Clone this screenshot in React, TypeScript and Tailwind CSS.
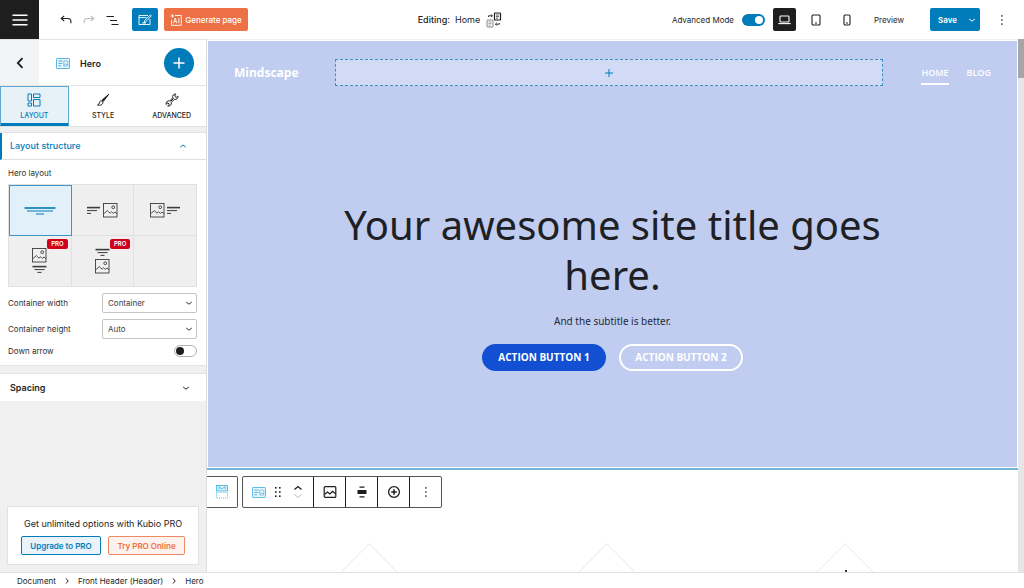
import type { ReactNode, SVGProps } from "react";

function Icon({ children, ...rest }: SVGProps<SVGSVGElement>) {
  return (
    <svg fill="none" stroke="currentColor" aria-hidden="true" {...rest}>
      {children}
    </svg>
  );
}

function HeroIcon() {
  return (
    <Icon viewBox="0 0 14 11" width="14" height="11" strokeWidth="0.8">
      <rect x="0.5" y="0.5" width="13" height="10" rx="0.6" fill="#e9f6fc" />
      <path d="M2.4 3h4M2.4 5.4h4M2.4 7.8h2.6" strokeWidth="0.9" />
      <path d="M7.8 8V3h4v5zM8 7.2l1.3-1.6 1 1 .6-.6.8 1" strokeWidth="0.6" />
    </Icon>
  );
}

function SectionIcon() {
  return (
    <Icon viewBox="0 0 12 14" width="12" height="14" strokeWidth="0.8">
      <rect x="0.5" y="0.5" width="11" height="5.4" fill="#dff1fa" />
      <path d="M2 2.2h2.5M2 4.2l2-1.4 2 1 2-1.4 2 1.8M8 2h2" strokeWidth="0.7" />
      <rect x="0.5" y="7.4" width="11" height="5.6" strokeDasharray="1 1" />
    </Icon>
  );
}

function Chevron({ dir = "down", className = "" }: { dir?: "up" | "down" | "right" | "left"; className?: string }) {
  const paths = {
    up: "M1.2 5.2 4 3l2.8 2.2",
    down: "M1.2 3 4 5.2 6.8 3",
    right: "M3 1.5 5.2 4 3 6.5",
    left: "M5.8 0.6 2.4 4l3.4 3.4",
  };
  return (
    <Icon viewBox="0 0 8 8" width="8" height="8" strokeWidth="1" className={className}>
      <path d={paths[dir]} />
    </Icon>
  );
}

function Dots() {
  return (
    <Icon viewBox="0 0 4 12" width="4" height="12" stroke="none" fill="currentColor">
      <rect x="1.2" y="1.2" width="1.4" height="1.4" />
      <rect x="1.2" y="5.3" width="1.4" height="1.4" />
      <rect x="1.2" y="9.4" width="1.4" height="1.4" />
    </Icon>
  );
}

function Picture({ x, y }: { x: number; y: number }) {
  return (
    <g transform={`translate(${x} ${y})`}>
      <rect x="0.5" y="0.5" width="13.5" height="13.5" strokeWidth="0.9" />
      <circle cx="10.2" cy="4.2" r="1.4" strokeWidth="0.9" />
      <path d="M1 10.5 4.3 7.6 7 10.2 8.6 8.8 10.3 10.4 12 9l2 1.8" strokeWidth="0.9" />
    </g>
  );
}

function HeaderBar() {
  return (
    <header className="flex h-[39px] shrink-0 items-center bg-white">
      <button aria-label="Menu" className="flex h-full w-[39px] items-center justify-center bg-[#1e1e1e] text-white">
        <Icon viewBox="0 0 16 12" width="16" height="12" strokeWidth="1.6">
          <path d="M0.5 1.2h15M0.5 6h15M0.5 10.8h15" />
        </Icon>
      </button>
      <div className="flex flex-1 items-center justify-between">
        <div className="flex items-center">
          <button aria-label="Undo" className="ml-[21px] text-[#1e1e1e]">
            <Icon viewBox="0 0 12 10" width="12" height="10" strokeWidth="1.1">
              <path d="M4.2 0.8 1.2 3.5l3 2.7M1.4 3.5h6.1c2.2 0 3.4 1.2 3.4 2.8v2" />
            </Icon>
          </button>
          <button aria-label="Redo" className="ml-[11px] text-[#bbbbbb]">
            <Icon viewBox="0 0 12 10" width="12" height="10" strokeWidth="1.1">
              <path d="M7.8 0.8l3 2.7-3 2.7M10.6 3.5H4.5C2.3 3.5 1.1 4.7 1.1 6.3v2" />
            </Icon>
          </button>
          <button aria-label="List view" className="ml-[11px] text-[#1e1e1e]">
            <Icon viewBox="0 0 14 10" width="14" height="10" strokeWidth="1.1">
              <path d="M0.5 1.5h7.5M4 5.5h7M5.5 9.5h7" />
            </Icon>
          </button>
          <button aria-label="Edit" className="ml-3 flex h-[23px] w-[26px] items-center justify-center rounded-xs bg-[#007cba] text-white">
            <Icon viewBox="0 0 14 12" width="14" height="12" strokeWidth="0.9">
              <path d="M10 1.5H1v9h11V5.2M1 3.6h7.4" />
              <path d="M6 8.7 6.8 6.4 12.4.8l1 1L7.9 7.7zM4 9h4" />
            </Icon>
          </button>
          <button className="ml-[6px] flex h-[23px] w-[84px] items-center justify-center gap-[3px] rounded-xs bg-[#ed7144] text-[8px] font-medium whitespace-nowrap text-white">
            <Icon viewBox="0 0 12 12" width="12" height="12" strokeWidth="0.9">
              <path d="M5 1.5h6.3v9.8H1.5V6" />
              <path d="M3.6 9.2 5.2 4l1.6 5.2M4.2 7.6h2M8.8 4v5.2" />
              <path d="M2.4 0v4M0.4 2h4" strokeWidth="0.8" />
            </Icon>
            Generate page
          </button>
        </div>
        <div className="flex items-center text-[9px]">
          <span className="font-medium">Editing:</span>
          <span className="ml-[5px]">Home</span>
          <button aria-label="Switch page" className="ml-[6px]">
            <Icon viewBox="0 0 16 16" width="16" height="16" strokeWidth="0.9">
              <rect x="8.5" y="1" width="6" height="7" rx="0.6" strokeWidth="1.2" />
              <path d="M10 3h3M10 4.6h3M10 6.2h2" strokeWidth="0.7" />
              <g stroke="#777777">
                <rect x="1" y="8" width="6" height="7" rx="0.6" />
                <path d="M2.5 10h3M2.5 11.6h3M2.5 13.2h2" strokeWidth="0.7" />
              </g>
              <path d="M2.5 5V3.8h3.8M5 2.4l1.4 1.4L5 5.2M13.3 11v1.2H9.6M10.8 10.8 9.4 12.2l1.4 1.4" />
            </Icon>
          </button>
        </div>
        <span />
      </div>
      <div className="flex items-center text-[8px]">
        <label htmlFor="advanced-mode">Advanced Mode</label>
        <input
          id="advanced-mode"
          type="checkbox"
          defaultChecked
          className="ml-2 flex h-3 w-[23px] appearance-none items-center justify-end rounded-full bg-[#007cba] px-[2px] before:size-2 before:rounded-full before:bg-white before:content-['']"
        />
        <button aria-label="Desktop" className="ml-2 flex size-[23px] items-center justify-center rounded-xs bg-[#1e1e1e] text-white">
          <Icon viewBox="0 0 13 10" width="13" height="10" strokeWidth="1.1">
            <rect x="2" y="1" width="9" height="6" rx="0.8" />
            <path d="M0.3 8.6h12.4" />
          </Icon>
        </button>
        <button aria-label="Tablet" className="ml-[15px]">
          <Icon viewBox="0 0 10 12" width="10" height="12" strokeWidth="1.1">
            <rect x="1" y="1" width="8" height="10" rx="1" />
            <path d="M4 9h2" />
          </Icon>
        </button>
        <button aria-label="Mobile" className="ml-[22px]">
          <Icon viewBox="0 0 8 12" width="8" height="12" strokeWidth="1.1">
            <rect x="1" y="1" width="6" height="10" rx="1.2" />
            <path d="M3 9h2" />
          </Icon>
        </button>
        <button className="ml-[23px]">Preview</button>
        <div className="ml-[26px] flex h-[23px] w-[50px] justify-between rounded-xs bg-[#007cba] font-semibold text-white">
          <button className="pl-2">Save</button>
          <button aria-label="Save options" className="pr-1 pl-1">
            <Chevron />
          </button>
        </div>
        <button aria-label="Options" className="mr-5 ml-5">
          <Dots />
        </button>
      </div>
    </header>
  );
}

function Tab({ label, active, children }: { label: string; active?: boolean; children: ReactNode }) {
  return (
    <button
      role="tab"
      aria-selected={!!active}
      className={
        "flex flex-1 flex-col items-center border pt-[6px] text-[7px] font-medium " +
        (active ? "border-[#5fa9d2] border-b-[#007cba] bg-[#e6f1f8] text-[#007cba] shadow-[inset_0_-2px_0_#007cba]" : "border-transparent")
      }
    >
      {children}
      <span className="mt-[3px] leading-3">{label}</span>
    </button>
  );
}

function ProBadge() {
  return (
    <span className="absolute top-[3px] right-[3px] rounded-xs bg-[#d0021b] px-1 text-[6px] leading-[10px] font-semibold text-white">PRO</span>
  );
}

function LayoutGrid() {
  const cell = "relative flex h-[51px] items-center justify-center border-r border-b border-[#e0e0e0] text-[#3c3c3c]";
  return (
    <div className="mt-[5px] grid grid-cols-3 border-t border-l border-[#e0e0e0] bg-[#efefef]">
      <button
        aria-label="Centered text"
        aria-pressed="true"
        className="relative flex h-[51px] items-center justify-center bg-[#e2f0f9] text-[#007cba] outline -outline-offset-1 outline-[#3b95c8]"
      >
        <Icon viewBox="0 0 32 8" width="32" height="8" stroke="#007cba">
          <path d="M0.5 1h31" strokeWidth="1.6" />
          <path d="M3 4h26M12 7h8" strokeWidth="1.1" />
        </Icon>
      </button>
      <button aria-label="Text left, image right" className={cell}>
        <Icon viewBox="0 0 32 15" width="32" height="15">
          <path d="M1 4.6h13" strokeWidth="1.6" />
          <path d="M1 7.6h10M1 10.4h4" />
          <Picture x={17} y={0} />
        </Icon>
      </button>
      <button aria-label="Image left, text right" className={cell}>
        <Icon viewBox="0 0 32 15" width="32" height="15">
          <Picture x={1} y={0} />
          <path d="M18 4.6h13" strokeWidth="1.6" />
          <path d="M18 7.6h10M18 10.4h4" />
        </Icon>
      </button>
      <button aria-label="Image above text" className={cell}>
        <Icon viewBox="0 0 15 26" width="15" height="26">
          <Picture x={0} y={0} />
          <path d="M0.5 18.6h14" strokeWidth="1.6" />
          <path d="M2.5 21.6h10M5.5 24.4h4" />
        </Icon>
        <ProBadge />
      </button>
      <button aria-label="Text above image" className={cell}>
        <Icon viewBox="0 0 15 26" width="15" height="26">
          <path d="M0.5 1.6h14" strokeWidth="1.6" />
          <path d="M2.5 4.6h10M5.5 7.4h4" />
          <Picture x={0} y={11} />
        </Icon>
        <ProBadge />
      </button>
      <div className={cell} />
    </div>
  );
}

function SelectRow({ id, label, options }: { id: string; label: string; options: string[] }) {
  return (
    <div className="mt-[6px] flex items-center">
      <label htmlFor={id} className="flex-1">
        {label}
      </label>
      <div className="relative w-[95px]">
        <select id={id} className="block h-5 w-full appearance-none rounded-xs border border-[#c4c4c4] bg-white px-[5px] text-[8px] text-[#3c3c3c]">
          {options.map((o) => (
            <option key={o}>{o}</option>
          ))}
        </select>
        <Chevron className="pointer-events-none absolute top-[6px] right-1" />
      </div>
    </div>
  );
}

function Sidebar() {
  return (
    <aside className="flex w-[207px] shrink-0 flex-col border-r border-[#dcdde0] bg-[#f0f0f1]">
      <div className="flex h-[47px] shrink-0 items-center border-t border-b border-[#e4e4e4] bg-white">
        <button aria-label="Back" className="flex h-full w-[39px] items-center justify-center bg-[#f3f4f5]">
          <Icon viewBox="0 0 8 12" width="8" height="12" strokeWidth="1.8">
            <path d="M6.5 1.2 1.8 6l4.7 4.8" />
          </Icon>
        </button>
        <div className="flex flex-1 items-center gap-[10px] pt-[2px] pl-[17px]">
          <span className="text-[#3ba4d8]">
            <HeroIcon />
          </span>
          <h2 className="text-[9px] font-semibold">Hero</h2>
        </div>
        <button aria-label="Add block" className="mr-3 flex size-[30px] items-center justify-center rounded-full bg-[#007cba] text-white">
          <Icon viewBox="0 0 12 12" width="12" height="12" strokeWidth="1.5">
            <path d="M6 0.5v11M0.5 6h11" />
          </Icon>
        </button>
      </div>
      <div role="tablist" className="flex h-[41px] shrink-0 border-b border-[#e0e0e0] bg-white">
        <Tab label="LAYOUT" active>
          <Icon viewBox="0 0 14 14" width="14" height="14" strokeWidth="1">
            <path d="M1 1h3.5v7H1zM1 10h3.5v3H1zM6.5 1H13v3.5H6.5zM6.5 6.5H13V13H6.5z" />
          </Icon>
        </Tab>
        <Tab label="STYLE">
          <Icon viewBox="0 0 14 14" width="14" height="14" strokeWidth="1">
            <path d="M12.8 1.2 6.2 7l1.2 1.3z" fill="currentColor" />
            <path d="M5.6 7.8c-1.4 0-1.9.8-2.1 2-.2 1.1-.9 1.8-2 2.2 2.6.8 5.6-.2 5.3-3z" />
          </Icon>
        </Tab>
        <Tab label="ADVANCED">
          <Icon viewBox="0 0 14 14" width="14" height="14" strokeWidth="1">
            <path d="M10.9 1.1a2.7 2.7 0 0 0-3.1 3.7L4.6 8a2.7 2.7 0 0 0-3.4 3.4l1.7-1.5 1.4 1.4-1.6 1.6A2.7 2.7 0 0 0 6.2 9.500L9.400 6.300a2.700 2.700 0 0 0 3.500-3.300l-1.700 1.500L9.600 3z" />
            <path d="M5.6 8.400 8.600 5.400" />
          </Icon>
        </Tab>
      </div>
      <section className="mt-[5px] border-t border-b border-[#e4e4e4] bg-white pb-2 text-[8px] text-[#2f2f2f]">
        <button
          aria-expanded="true"
          className="flex h-[27px] w-full items-center justify-between border-b border-l-2 border-b-[#e0e0e0] border-l-[#007cba] pr-[19px] pl-2 text-[9px] font-medium text-[#007cba]"
        >
          Layout structure
          <Chevron dir="up" />
        </button>
        <div className="pr-[9px] pl-2">
          <h3 className="mt-[7px] leading-3">Hero layout</h3>
          <LayoutGrid />
          <SelectRow id="container-width" label="Container width" options={["Container", "Full width"]} />
          <SelectRow id="container-height" label="Container height" options={["Auto", "Full screen"]} />
          <div className="mt-[6px] flex items-center justify-between">
            <label htmlFor="down-arrow">Down arrow</label>
            <input
              id="down-arrow"
              type="checkbox"
              className="flex h-3 w-[23px] appearance-none items-center rounded-full border border-[#b0b0b0] bg-white px-[1px] before:size-2 before:rounded-full before:bg-[#1e1e1e] before:content-['']"
            />
          </div>
        </div>
      </section>
      <button
        aria-expanded="false"
        className="mt-[7px] flex h-[28px] shrink-0 items-center justify-between border-t border-[#e4e4e4] bg-white pr-4 pl-[10px] text-[9px] font-semibold"
      >
        Spacing
        <Chevron />
      </button>
      <div className="mx-[7px] mt-auto mb-[7px] border border-[#e2e2e2] bg-white py-[9px] text-center text-[9px]">
        <p className="leading-4">Get unlimited options with Kubio PRO</p>
        <div className="mt-1 flex justify-center gap-[7px] font-medium">
          <a href="#upgrade" className="flex h-[19px] w-20 items-center justify-center rounded-xs border border-[#007cba] bg-[#e9f3f9] text-[8px] font-semibold text-[#007cba]">
            Upgrade to PRO
          </a>
          <a href="#try" className="flex h-[19px] w-[77px] items-center justify-center rounded-xs border border-[#ed8a64] bg-[#fdf2ed] text-[8px] font-semibold text-[#ed7144]">
            Try PRO Online
          </a>
        </div>
      </div>
    </aside>
  );
}

function BlockToolbar() {
  const cell = "flex w-8 items-center justify-center border-l border-[#1e1e1e]";
  return (
    <div className="flex gap-1">
      <button aria-label="Select section" className="flex h-8 w-[31px] items-center justify-center rounded-r-xs border border-l-0 border-[#555555] bg-white text-[#3bb0e0]">
        <SectionIcon />
      </button>
      <div role="toolbar" aria-label="Block tools" className="flex h-8 rounded-xs border border-[#555555] bg-white">
        <div className="flex w-[70px] items-center pl-[9px]">
          <button aria-label="Hero" className="text-[#3bb0e0]">
            <HeroIcon />
          </button>
          <button aria-label="Drag" className="ml-2">
            <Icon viewBox="0 0 8 12" width="8" height="12" stroke="none" fill="currentColor">
              {[1, 5.2, 9.4].map((y) => (
                <g key={y}>
                  <rect x="1" y={y} width="1.6" height="1.6" />
                  <rect x="5" y={y} width="1.6" height="1.6" />
                </g>
              ))}
            </Icon>
          </button>
          <div className="ml-[11px] flex flex-col gap-[2px]">
            <button aria-label="Move up">
              <Icon viewBox="0 0 10 6" width="10" height="6" strokeWidth="1.3">
                <path d="M1.5 4.5 5 1.5l3.5 3" />
              </Icon>
            </button>
            <button aria-label="Move down" className="text-[#bbbbbb]">
              <Icon viewBox="0 0 10 6" width="10" height="6">
                <path d="M1.5 1.5 5 4.5l3.5-3" />
              </Icon>
            </button>
          </div>
        </div>
        <button aria-label="Image" className={cell}>
          <Icon viewBox="0 0 14 14" width="14" height="14" strokeWidth="1.2">
            <rect x="1.2" y="1.6" width="11.6" height="10.8" rx="1" />
            <path d="M1.500 9.500 4.500 7l2.400 2 2.800-2.600 3 2.600" />
          </Icon>
        </button>
        <button aria-label="Align" className={cell}>
          <Icon viewBox="0 0 10 12" width="10" height="12">
            <path d="M2.5 1.2h5M2.5 10.8h5" strokeWidth="1.2" />
            <path d="M0.5 6h9" strokeWidth="4" />
          </Icon>
        </button>
        <button aria-label="Add" className={cell}>
          <Icon viewBox="0 0 14 14" width="14" height="14" strokeWidth="1.3">
            <circle cx="7" cy="7" r="5.4" />
            <path d="M7 4.2v5.600M4.200 7h5.600" strokeWidth="1.500" />
          </Icon>
        </button>
        <button aria-label="More" className={cell}>
          <Dots />
        </button>
      </div>
    </div>
  );
}

function Canvas() {
  return (
    <main className="flex min-w-0 flex-1 flex-col overflow-hidden border-t border-[#eef1f3] bg-white">
      <div className="shrink-0 border-b-2 border-[#6fb6dc] p-px">
        <section className="bg-[#c0cdf0] px-[26px] pt-[18px] pb-24 font-['Open_Sans',sans-serif]">
          <nav className="flex items-center text-white">
            <a href="#home" className="text-[12px] font-bold">
              Mindscape
            </a>
            <button
              aria-label="Add menu block"
              className="mr-[38px] ml-9 flex h-[27px] flex-1 items-center justify-center border border-dashed border-[#3d8fc0] bg-[#d2dbf6] text-[#007cba]"
            >
              <Icon viewBox="0 0 10 10" width="10" height="10">
                <path d="M5 1v8M1 5h8" />
              </Icon>
            </button>
            <a href="#home" className="mt-[6px] border-b-2 border-white pb-[3px] text-[9px] leading-[14px] font-semibold">
              HOME
            </a>
            <a href="#blog" className="ml-[18px] text-[9px] leading-[14px] font-semibold">
              BLOG
            </a>
          </nav>
          <div className="mt-[114px] flex flex-col items-center text-center">
            <h1 className="max-w-[600px] font-['Noto_Sans',sans-serif] text-[40px] leading-[50px] font-normal text-[#1e2024]">
              Your awesome site title goes here.
            </h1>
            <p className="mt-[13px] font-['Noto_Sans',sans-serif] text-[10px] leading-4 text-[#26293a]">And the subtitle is better.</p>
            <div className="mt-[15px] flex gap-[13px] text-[10px] font-bold text-white">
              <button className="h-[27px] w-[124px] rounded-full bg-[#134fd3]">ACTION BUTTON 1</button>
              <button className="h-[27px] w-[124px] rounded-full border-2 border-white">ACTION BUTTON 2</button>
            </div>
          </div>
        </section>
      </div>
      <div className="mt-[6px]">
        <BlockToolbar />
      </div>
      <div className="mt-[35px] grid shrink-0 grid-cols-3 justify-items-center pr-[54px] pl-[43px]">
        {["one", "two", "three"].map((k) => (
          <Icon key={k} viewBox="0 0 60 60" width="60" height="60" stroke="#e6e6e6">
            <path d="M30 0.7 59 30 30 59.3 1 30z" />
            {k === "three" && <path d="M31 27v6" stroke="#333333" strokeWidth="2" />}
          </Icon>
        ))}
      </div>
    </main>
  );
}

export default function App() {
  return (
    <div className="flex h-screen flex-col overflow-hidden bg-white font-['Inter',sans-serif] text-[#1e1e1e]">
      <HeaderBar />
      <div className="flex min-h-0 flex-1">
        <Sidebar />
        <Canvas />
        <div className="w-[6px] shrink-0 bg-[#e6e6e6]">
          <div className="h-[39px] bg-[#a6a6a6]" />
        </div>
      </div>
      <footer className="h-4 shrink-0 border-t border-[#e0e0e0] bg-white">
        <nav aria-label="Breadcrumb" className="flex h-full items-center gap-[7px] pl-[17px] text-[8px] leading-none">
          <a href="#document">Document</a>
          <Chevron dir="right" />
          <a href="#header">Front Header (Header)</a>
          <Chevron dir="right" />
          <a href="#hero">Hero</a>
        </nav>
      </footer>
    </div>
  );
}
